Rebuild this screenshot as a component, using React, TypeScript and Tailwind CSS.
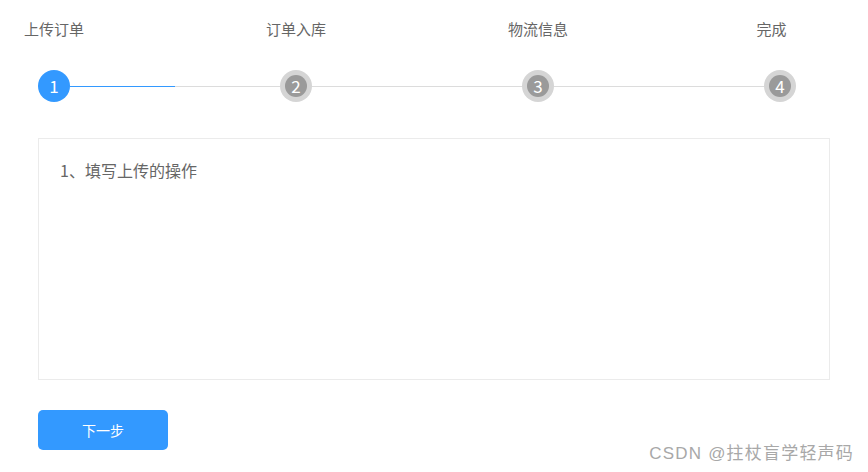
import React from "react";

const steps = ["上传订单", "订单入库", "物流信息", "完成"];

export default function App() {
  return (
    <div
      className="relative w-[868px] h-[472px] bg-white overflow-hidden"
      style={{ fontFamily: '"Microsoft YaHei", "Noto Sans CJK SC", "Noto Sans", sans-serif' }}
    >
      <div className="flex pl-[38px] pt-[19px]">
        {steps.map((s, i) => (
          <React.Fragment key={s}>
            <div className="flex flex-col items-center w-[32px]">
              <div
                className={
                  "h-[20px] leading-[20px] text-[15px] text-[#666] whitespace-nowrap" +
                  (i === steps.length - 1 ? " pr-[17px]" : "")
                }
              >
                {s}
              </div>
              <div className="mt-[31px]">
                {i === 0 ? (
                  <div className="w-[32px] h-[32px] rounded-full bg-[#3399ff] text-white text-[17px] flex items-center justify-center">
                    {i + 1}
                  </div>
                ) : (
                  <div className="w-[32px] h-[32px] rounded-full bg-[#d5d5d5] flex items-center justify-center">
                    <div className="w-[22px] h-[22px] rounded-full bg-[#9a9a9a] text-white text-[17px] flex items-center justify-center">
                      {i + 1}
                    </div>
                  </div>
                )}
              </div>
            </div>
            {i < steps.length - 1 && (
              <div className="w-[210px] mt-[67px] h-px flex">
                {i === 0 ? (
                  <>
                    <div className="w-[105px] h-px bg-[#3399ff]" />
                    <div className="flex-1 h-px bg-[#dcdcdc]" />
                  </>
                ) : (
                  <div className="flex-1 h-px bg-[#dcdcdc]" />
                )}
              </div>
            )}
          </React.Fragment>
        ))}
      </div>

      <div className="ml-[38px] mt-[36px] w-[792px] h-[242px] border border-[#ebebeb] pl-[21px] pt-[19px]">
        <div className="text-[16px] leading-[24px] text-[#666]">1、填写上传的操作</div>
      </div>

      <button className="ml-[38px] mt-[30px] w-[130px] h-[40px] rounded-[5px] bg-[#3399ff] text-white text-[14px] flex items-center justify-center">
        下一步
      </button>

      <div
        className="absolute right-[14px] bottom-[8px] text-[17px] leading-[20px] text-[#a8a8a8] tracking-[1.2px]"
        style={{ fontFamily: '"Liberation Sans", "Noto Sans CJK SC", sans-serif' }}
      >
        CSDN @拄杖盲学轻声码
      </div>
    </div>
  );
}
